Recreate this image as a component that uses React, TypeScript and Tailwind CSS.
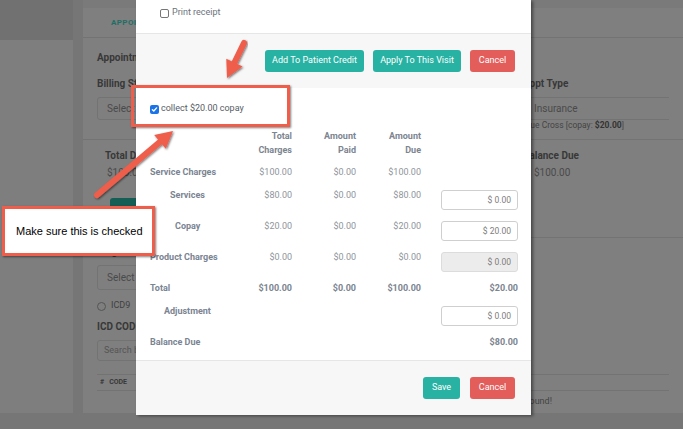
import React from 'react'

type Pt = [number, number]

// arrow as a stroked shaft plus a triangular head
function Arrow({ tail, tip }: { tail: Pt; tip: Pt }) {
  const dx = tip[0] - tail[0]
  const dy = tip[1] - tail[1]
  const len = Math.hypot(dx, dy)
  const ux = dx / len
  const uy = dy / len
  const nx = -uy
  const ny = ux
  const headLen = 17
  const head = 9
  const bx = tip[0] - ux * headLen
  const by = tip[1] - uy * headLen
  const pts = [
    [bx + nx * head, by + ny * head],
    [tip[0], tip[1]],
    [bx - nx * head, by - ny * head],
  ]
    .map(p => p.map(v => v.toFixed(1)).join(','))
    .join(' ')
  return (
    <g filter="url(#arrowShadow)">
      <line x1={tail[0]} y1={tail[1]} x2={bx + ux * 2} y2={by + uy * 2} stroke="#ef5d4b" strokeWidth="6" strokeLinecap="round" />
      <polygon points={pts} fill="#ef5d4b" />
    </g>
  )
}

function CheckBox({ checked }: { checked?: boolean }) {
  if (checked) {
    return (
      <span className="w-[9px] h-[9px] rounded-[2px] bg-[#1a73e8] flex items-center justify-center shrink-0">
        <svg width="7" height="7" viewBox="0 0 10 10" fill="none" stroke="white" strokeWidth="2" strokeLinecap="round" strokeLinejoin="round">
          <path d="M2 5.2l2 2 4-4.5" />
        </svg>
      </span>
    )
  }
  return <span className="w-[9px] h-[9px] rounded-[2px] border border-[#767676] bg-white shrink-0" />
}

function Btn({ children, w, red }: { children: React.ReactNode; w: string; red?: boolean }) {
  return (
    <button className={`${w} h-[22px] rounded-[3px] text-[9px] text-white ${red ? 'bg-[#e35d5b]' : 'bg-[#28b2a3]'}`}>
      {children}
    </button>
  )
}

function MoneyInput({ value, disabled }: { value: string; disabled?: boolean }) {
  return (
    <div
      className={`ml-auto mt-[2px] w-[77px] h-[20px] rounded-[3px] border flex items-center justify-end pr-[6px] text-[8.5px] text-[#7d7d7d] ${
        disabled ? 'bg-[#ececec] border-[#dcdcdc]' : 'bg-white border-[#cfcfcf]'
      }`}
    >
      {value}
    </div>
  )
}

const ROW = 'grid grid-cols-[82px_60px_64px_65px_97px] items-start'
const LABEL = 'text-[9px] leading-[14px] font-bold text-[#7a8492]'
const VAL = 'text-[9px] leading-[14px] text-right text-[#8f959c]'
const TOT = 'text-[9px] leading-[14px] text-right font-bold text-[#7c8590]'

export default function App() {
  return (
    <div className="relative w-[683px] h-[429px] overflow-hidden bg-[#767676] font-['Roboto',sans-serif]">
      {/* page behind the modal (dimmed) */}
      <div className="flex h-[413px] gap-[10px]">
        <aside className="w-[73px] bg-[#7e7e7e] flex flex-col">
          <div className="h-[40px] bg-[#717171]" />
        </aside>
        <main className="flex-1 bg-[#7f7f7f] flex flex-col">
          <div className="h-[8px] bg-[#7a7a7a]" />
          <div className="h-[30px] border-b border-[#737373] flex items-center pl-[28px]">
            <span className="text-[8px] font-bold tracking-[0.4px] text-[#1f6e65]">APPOINTMENT DETAILS</span>
          </div>

          {/* appointment info */}
          <div className="h-[102px] border-b border-[#737373] px-[14px] pt-[13px]">
            <p className="text-[10px] leading-[14px] font-bold text-[#383838]">Appointment Information</p>
            <div className="flex mt-[12px]">
              <div className="w-[230px]">
                <p className="text-[10px] leading-[14px] font-bold text-[#383838]">Billing Status</p>
                <div className="mt-[6px] h-[23px] rounded-[3px] border border-[#737373] flex items-center pl-[9px] text-[10px] text-[#4a4a4a]">
                  Select billing status
                </div>
              </div>
              <div className="ml-auto w-[146px]">
                <p className="text-[10px] leading-[14px] font-bold text-[#383838]">Appt Type</p>
                <div className="mt-[6px] h-[23px] border-y border-[#737373] flex items-center pl-[11px] text-[10px] text-[#4a4a4a]">
                  Insurance
                </div>
                <p className="text-[8.5px] leading-[11px] text-[#444]">
                  Blue Cross [copay: <b className="text-[#333]">$20.00</b>]
                </p>
              </div>
            </div>
          </div>

          {/* totals */}
          <div className="h-[98px] border-b border-[#737373] px-[14px] flex">
            <div className="w-[230px] pl-[8px] pt-[9px]">
              <p className="text-[10px] leading-[14px] font-bold text-[#383838]">Total Due</p>
              <p className="mt-[3px] pl-[2px] text-[10px] leading-[14px] text-[#4a4a4a]">$100.00</p>
              <div className="mt-[18px] ml-[5px] w-[80px] h-[20px] rounded-[3px] bg-[#155e56]" />
            </div>
            <div className="ml-auto w-[146px] pt-[9px]">
              <p className="text-[10px] leading-[14px] font-bold text-[#383838]">Balance Due</p>
              <p className="mt-[3px] pl-[11px] text-[10px] leading-[14px] text-[#4a4a4a]">$100.00</p>
            </div>
          </div>

          {/* diagnosis */}
          <div className="flex-1 px-[14px] flex flex-col">
            <p className="pt-[7px] text-[10px] leading-[14px] font-bold text-[#383838]">Diagnosis Type</p>
            <div className="mt-[6px] w-[230px] h-[25px] rounded-[3px] border border-[#737373] flex items-center pl-[9px] text-[10px] text-[#4a4a4a]">
              Select a diagnosis type
            </div>
            <div className="mt-[9px] flex items-center gap-[5px] h-[14px]">
              <span className="w-[9px] h-[9px] rounded-full border border-[#555]" />
              <span className="text-[9px] text-[#3f3f3f]">ICD9</span>
            </div>
            <p className="mt-[7px] text-[10px] leading-[14px] font-bold text-[#383838]">ICD CODE</p>
            <div className="mt-[6px] w-[230px] h-[21px] rounded-[3px] border border-[#737373] flex items-center pl-[6px] text-[9px] text-[#555]">
              Search by code
            </div>
            <div className="mt-[13px] h-[17px] border-y border-[#737373] flex items-center pl-[3px] gap-[5px] text-[7px] font-bold text-[#383838]">
              <span>#</span>
              <span>CODE</span>
            </div>
            <div className="h-[22px] flex items-center justify-end pr-[117px] text-[9px] text-[#444]">No records found!</div>
          </div>
        </main>
      </div>

      {/* modal */}
      <div className="absolute left-[136px] top-0 w-[395px] bg-white shadow-[2px_1px_3px_rgba(0,0,0,0.45)] flex flex-col">
        <div className="h-[33px] pl-[24px] pt-[6px]">
          <label className="flex items-center gap-[3px] h-[14px] text-[9px] text-[#6c727b]">
            <CheckBox />
            Print receipt
          </label>
        </div>
        <div className="h-[55px] bg-[#f7f7f7] border-t border-[#e6e6e6] flex items-center justify-end gap-[9px] pr-[16px]">
          <Btn w="w-[99px]">Add To Patient Credit</Btn>
          <Btn w="w-[88px]">Apply To This Visit</Btn>
          <Btn w="w-[45px]" red>Cancel</Btn>
        </div>

        <div className="h-[272px] pl-[14px] pr-[13px] pt-[14px]">
          <label className="flex items-center gap-[2px] h-[14px] text-[9px] text-[#575d66]">
            <CheckBox checked />
            collect $20.00 copay
          </label>

          <div className={`${ROW} mt-[13px]`}>
            <span />
            <span className={`${TOT} text-[#7a8492]`}>Total<br />Charges</span>
            <span className={`${TOT} text-[#7a8492]`}>Amount<br />Paid</span>
            <span className={`${TOT} text-[#7a8492]`}>Amount<br />Due</span>
            <span />
          </div>

          <div className={`${ROW} mt-[8px] h-[23px]`}>
            <span className={LABEL}>Service Charges</span>
            <span className={VAL}>$100.00</span>
            <span className={VAL}>$0.00</span>
            <span className={VAL}>$100.00</span>
            <span />
          </div>
          <div className={`${ROW} h-[31px]`}>
            <span className={`${LABEL} pl-[20px]`}>Services</span>
            <span className={VAL}>$80.00</span>
            <span className={VAL}>$0.00</span>
            <span className={VAL}>$80.00</span>
            <MoneyInput value="$ 0.00" />
          </div>
          <div className={`${ROW} h-[31px]`}>
            <span className={`${LABEL} pl-[25px]`}>Copay</span>
            <span className={VAL}>$20.00</span>
            <span className={VAL}>$0.00</span>
            <span className={VAL}>$20.00</span>
            <MoneyInput value="$ 20.00" />
          </div>
          <div className={`${ROW} h-[31px]`}>
            <span className={LABEL}>Product Charges</span>
            <span className={VAL}>$0.00</span>
            <span className={VAL}>$0.00</span>
            <span className={VAL}>$0.00</span>
            <MoneyInput value="$ 0.00" disabled />
          </div>
          <div className={`${ROW} h-[23px]`}>
            <span className={LABEL}>Total</span>
            <span className={TOT}>$100.00</span>
            <span className={TOT}>$0.00</span>
            <span className={TOT}>$100.00</span>
            <span className={TOT}>$20.00</span>
          </div>
          <div className={`${ROW} h-[31px]`}>
            <span className={`${LABEL} pl-[14px]`}>Adjustment</span>
            <span />
            <span />
            <span />
            <MoneyInput value="$ 0.00" />
          </div>
          <div className={ROW}>
            <span className={LABEL}>Balance Due</span>
            <span />
            <span />
            <span />
            <span className={TOT}>$80.00</span>
          </div>
        </div>

        <div className="h-[55px] bg-[#f7f7f7] border-t border-[#e6e6e6] flex items-center justify-end gap-[10px] pr-[16px]">
          <Btn w="w-[37px]">Save</Btn>
          <Btn w="w-[45px]" red>Cancel</Btn>
        </div>
      </div>

      {/* annotations */}
      <div className="absolute left-[131px] top-[85px] w-[159px] h-[42px] border-[3px] border-[#ef5d4b] shadow-[1px_1px_2px_rgba(0,0,0,0.5)]" />
      <div className="absolute left-[2px] top-[206px] w-[153px] h-[50px] bg-white border-[3px] border-[#ef5d4b] shadow-[1px_1px_2px_rgba(0,0,0,0.5)] flex items-center pl-[11px] font-['Liberation_Sans',sans-serif] text-[11px] text-black">
        Make sure this is checked
      </div>
      <svg className="absolute inset-0" width="683" height="429">
        <defs>
          <filter id="arrowShadow" x="-20%" y="-20%" width="140%" height="140%">
            <feDropShadow dx="1" dy="1" stdDeviation="0.8" floodColor="#000" floodOpacity="0.55" />
          </filter>
        </defs>
        <Arrow tail={[97, 195]} tip={[173, 131]} />
        <Arrow tail={[244, 43]} tip={[227, 78]} />
      </svg>
    </div>
  )
}
